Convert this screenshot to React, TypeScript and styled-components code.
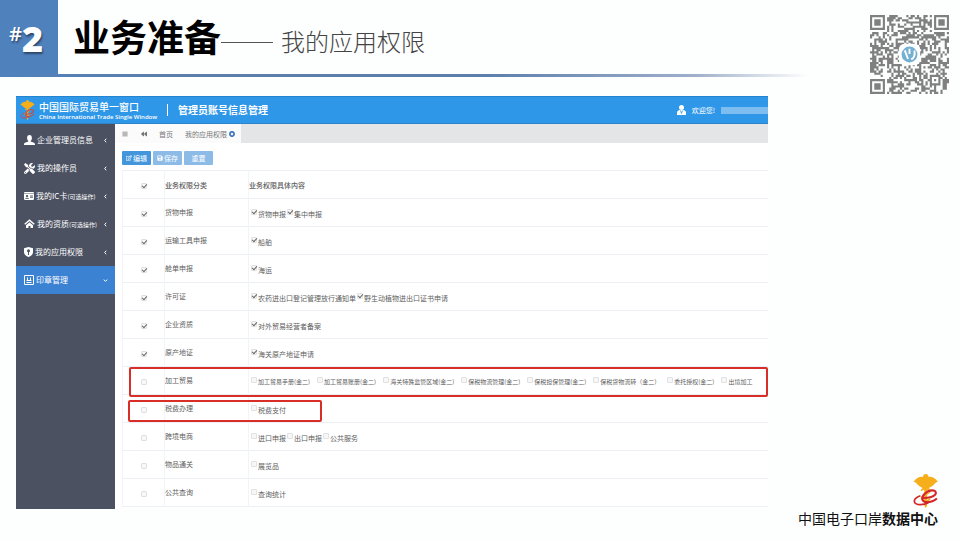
import React from "react";
import styled, { createGlobalStyle, css } from "styled-components";
import { FaTools, FaBars, FaBackward, FaRegEdit, FaSave, FaTimesCircle, FaIdCard } from "react-icons/fa";

const GlobalStyle = createGlobalStyle`
  * { box-sizing: border-box; }
  body { margin: 0; background: #fdfefe; font-family: "Noto Sans CJK SC", sans-serif; color: #555; }
  button, input { font: inherit; margin: 0; padding: 0; border: 0; }
  a { color: inherit; text-decoration: none; }
`;

const Slide = styled.div`
  display: grid;
  grid-template-columns: minmax(0, 1fr) 152px;
  min-height: 100vh;
`;

const Body = styled.main`
  display: flex;
  flex-direction: column;
`;

const TitleBar = styled.header`
  display: flex;
  flex-wrap: wrap;
`;

const Rule = styled.div`
  flex: 0 0 100%;
  height: 3px;
  background: linear-gradient(90deg, #4f81bd 0, #5b7fac 20%, #5b7fac 60%, #9fafcb 86%, #fdfefe 100%);
`;

const Badge = styled.div`
  display: flex;
  align-items: center;
  justify-content: center;
  width: 58px;
  height: 74px;
  padding: 4px 6px 0 0;
  background: #4f81bd;
  color: #fff;
  font: 800 36px/40px "Open Sans", "Noto Sans", sans-serif;
  text-shadow: 1px 2px 2px rgba(0, 0, 0, 0.45);
`;

const Hash = styled.span`
  align-self: flex-start;
  margin-top: 18px;
  font-size: 20px;
  font-weight: 600;
  line-height: 24px;
`;

const Title = styled.h1`
  margin: 0 0 0 15px;
  color: #000;
  font-size: 37px;
  font-weight: 700;
  line-height: 72px;
  white-space: nowrap;
`;

const TitleDash = styled.span`
  width: 52px;
  height: 1px;
  margin-top: 42px;
  background: #555;
`;

const Subtitle = styled.p`
  margin: 0 0 0 8px;
  color: #444;
  font-size: 24px;
  font-weight: 300;
  line-height: 82px;
  height: 74px;
  white-space: nowrap;
`;

const Side = styled.aside`
  display: flex;
  flex-direction: column;
  align-items: flex-end;
  justify-content: space-between;
  padding: 15px 11px 12px 0;
`;

const Brand = styled.footer`
  display: flex;
  flex-direction: column;
  align-items: flex-end;
  padding-right: 11px;
  color: #111;
  font-size: 14px;
  line-height: 20px;
  white-space: nowrap;
`;

const BrandMark = styled.span`
  display: flex;
`;

const App = styled.section`
  margin: 19px 40px 0 16px;
  background: #fff;
`;

const AppBar = styled.div`
  display: flex;
  align-items: center;
  height: 28px;
  padding-left: 4px;
  background: #2f97e8;
  border-top: 1px solid #2484cd;
  border-bottom: 1px solid #2d86cc;
  color: #fff;
`;

const Product = styled.div`
  display: flex;
  flex-direction: column;
  width: 128px;
  margin-left: 4px;
  padding-top: 1px;
  font-size: 10px;
  font-weight: 500;
  line-height: 12px;
  white-space: nowrap;
`;

const ProductEn = styled.span`
  font: 600 6px/8px "Open Sans", "Noto Sans", sans-serif;
`;

const AppTitle = styled.h2`
  flex: 1;
  margin: 0;
  padding-left: 10px;
  border-left: 1px solid #fff;
  font-size: 10px;
  font-weight: 700;
  line-height: 12px;
`;

const Account = styled.div`
  display: flex;
  align-items: center;
  gap: 6px;
  font-size: 7px;
`;

const Redacted = styled.span`
  width: 47px;
  height: 7px;
  background: #7dbdf0;
`;

const Columns = styled.div`
  display: grid;
  grid-template-columns: 99px minmax(0, 1fr);
`;

const Menu = styled.nav`
  padding-top: 2px;
  background: #4b5161;
`;

const MenuItem = styled.a<{ $active?: boolean }>`
  display: flex;
  align-items: center;
  gap: 2px;
  height: 28px;
  padding: 0 7px 0 8px;
  background: ${(p) => (p.$active ? "#3c82d2" : "transparent")};
  color: #fff;
  font-size: 8px;
  line-height: 12px;
  white-space: nowrap;
  > svg:last-child { margin-left: auto; }
`;

const Small = styled.small`
  font-size: 6px;
`;

const TabBar = styled.div`
  display: flex;
  align-items: stretch;
  height: 19px;
  background: #e4e5e6;
  font-size: 7px;
`;

const Tab = styled.button<{ $w: number }>`
  display: flex;
  align-items: center;
  justify-content: center;
  gap: 2px;
  width: ${(p) => p.$w}px;
  background: #fbfbfb;
  color: #777;
  white-space: nowrap;
`;

const Toolbar = styled.div`
  display: flex;
  gap: 2px;
  padding: 8px 7px 5px;
`;

const Action = styled.button<{ $muted?: boolean }>`
  display: flex;
  align-items: center;
  justify-content: center;
  gap: 1px;
  width: 29px;
  height: 14px;
  border-radius: 1px;
  background: ${(p) => (p.$muted ? "#8dbbe8" : "#4396dc")};
  color: #fff;
  font-size: 7px;
  white-space: nowrap;
`;

const Content = styled.div`
  padding-bottom: 2px;
`;

const Grid = styled.table`
  width: calc(100% - 7px);
  margin-left: 7px;
  border-collapse: collapse;
  table-layout: fixed;
  border-top: 1px solid #eceff5;
`;

const Row = styled.tr`
  position: relative;
  height: 28px;
  border-bottom: 1px solid #eceff5;
`;

const cell = css`
  padding: 0;
  text-align: left;
  font-size: 7px;
  line-height: 12px;
  border-left: 1px solid #f3f4f9;
  color: #606060;
  white-space: nowrap;
`;

const Head = styled.th`
  ${cell}
  font-weight: 500;
`;

const Cell = styled.td<{ $name?: boolean }>`
  ${cell}
  padding-bottom: ${(p) => (p.$name ? 2 : 0)}px;
`;

const TickCell = styled.td`
  ${cell}
  padding: 2px 0 0 18px;
`;

const Tick = styled.input`
  appearance: none;
  position: relative;
  flex: none;
  display: block;
  width: 6px;
  height: 6px;
  border: 1px solid #dfe1e3;
  border-radius: 1px;
  background: #f7f7f7;
  &:checked::after {
    content: "";
    position: absolute;
    left: 1px;
    top: -1px;
    width: 2px;
    height: 4px;
    border: solid #666;
    border-width: 0 1px 1px 0;
    transform: rotate(42deg);
  }
`;

const Options = styled.div<{ $dense?: boolean }>`
  display: flex;
  gap: ${(p) => (p.$dense ? 7 : 1)}px;
  padding: 2px 0 0 2px;
  font-size: ${(p) => (p.$dense ? 6 : 7)}px;
`;

const Option = styled.label`
  display: flex;
  gap: 1px;
  > input { margin-top: 1px; }
`;

const Highlight = styled.span<{ $short?: boolean }>`
  position: absolute;
  left: ${(p) => (p.$short ? 5 : 6)}px;
  top: ${(p) => (p.$short ? 5 : 0)}px;
  width: ${(p) => (p.$short ? "194px" : "calc(100% - 6px)")};
  height: ${(p) => (p.$short ? 22 : 30)}px;
  border: 2px solid #d92d27;
  border-radius: 2px;
  pointer-events: none;
`;

function Emblem({ size, base = "#d3272b" }: { size: number; base?: string }) {
  return (
    <svg width={size * 0.75} height={size} viewBox="0 0 24 32" aria-hidden="true">
      <g fill="#f6ae1b">
        <circle cx="12" cy="2.500" r="2.500" />
        <path d="M12 4c3.500-2.500 8-1.500 11.500 3.500-1.200 0-2 .3-2.500 1.200-.8.200-1.300.8-1.500 1.800-1 0-1.700.5-2 1.500-1.200 0-1.800.5-2.500 1.500h-6c-.7-1-1.300-1.500-2.500-1.500-.3-1-1-1.500-2-1.500-.2-1-.7-1.600-1.500-1.800C2.500 7.800 1.700 7.500.500 7.500 4 2.500 8.500 1.500 12 4z" />
        <path d="M10.500 12h3l-.3 18L12 32l-1.200-2z" />
        <path d="M8 16c0-3 8-3 8 0s-8 3-8 6.500 7 3.500 8 .5" fill="none" stroke="#f6ae1b" strokeWidth="1.500" />
      </g>
      <path d="M8 22.500c6 .3 13.500-1 13.500-4.800 0-3.200-6.500-3.200-10.500.800-3.800 4-2.500 8 2 8 3.500 0 7-1.300 9.500-3.500" fill="none" stroke={base} strokeWidth="2" />
      <path d="M7 20.500C3 22 .8 24.500 1.500 26.500c1 2.800 8 3 13 .5" fill="none" stroke={base} strokeWidth="1.600" />
    </svg>
  );
}

function Qr() {
  const n = 37;
  let seed = 20177;
  const d: string[] = [];
  const ring = (x: number, y: number, cx: number, cy: number) => Math.max(Math.abs(x - cx), Math.abs(y - cy));
  for (let y = 0; y < n; y++) {
    for (let x = 0; x < n; x++) {
      seed = (seed * 1103515245 + 12345) % 2147483648;
      let on = (seed >> 16) % 100 < 52;
      for (const [cx, cy] of [[3, 3], [33, 3], [3, 33]]) {
        const r = ring(x, y, cx, cy);
        if (r <= 4) on = r !== 4 && r !== 2;
      }
      const a = ring(x, y, 30, 30);
      if (a <= 2) on = a !== 1;
      if (on) d.push(`M${x} ${y}h1v1h-1z`);
    }
  }
  return (
    <svg width="79" height="79" viewBox="0 0 37 37" role="img" aria-label="QR">
      <path d={d.join("")} fill="#808080" />
      <rect x="13.5" y="13.5" width="10" height="10" rx="2.5" fill="#fdfefe" />
      <circle cx="18.5" cy="18.5" r="3.7" fill="#74b0d2" />
      <path d="M16.300 16.600l1.500 4M18.500 15.800v2.500M20.800 16.600c.4 2-.4 3.600-1.500 4.200" stroke="#fff" strokeWidth=".9" fill="none" />
    </svg>
  );
}

const Chevron = ({ down }: { down?: boolean }) => (
  <svg width="5" height="5" viewBox="0 0 5 5" fill="none" stroke="#fff" aria-hidden="true">
    <path d={down ? "M.7 1.7l1.8 1.5 1.8-1.5" : "M3.2.7L1.7 2.5l1.5 1.8"} />
  </svg>
);

const PersonIcon = () => (
  <svg width="11" height="10" viewBox="0 0 11 10" fill="#fff" aria-hidden="true">
    <ellipse cx="5.500" cy="3" rx="2.400" ry="3" />
    <path d="M4.300 5h2.400v1.600L10 7.800c.7.300 1 .9 1 2.200H0c0-1.300.3-1.900 1-2.200l3.300-1.200z" />
  </svg>
);

const HomeIcon = () => (
  <svg width="11" height="10" viewBox="0 0 11 10" aria-hidden="true">
    <path d="M.7 5.200l4.800-4 4.800 4" stroke="#fff" strokeWidth="1.400" fill="none" />
    <path d="M5.500 3.300L2 6.300V9h2.500V7h2v2H9V6.300z" fill="#fff" />
  </svg>
);

const ShieldIcon = () => (
  <svg width="9" height="10" viewBox="0 0 9 10" aria-hidden="true">
    <path d="M4.500 0L9 1.200V5c0 2.500-2 4.200-4.500 5C2 9.200 0 7.500 0 5V1.200z" fill="#fff" />
    <path d="M4.500 8V5" stroke="#4b5161" />
    <circle cx="4.500" cy="3.800" r="1.500" fill="#4b5161" />
  </svg>
);

const SealIcon = () => (
  <svg width="10" height="10" viewBox="0 0 10 10" fill="none" stroke="#fff" aria-hidden="true">
    <path d="M.5.5h9v9h-9zM2.500 7.500h5M3.500 2.500v3M6.500 2.500v3M2.500 5.500h5" />
  </svg>
);

const UserIcon = () => (
  <svg width="9" height="10" viewBox="0 0 9 10" aria-hidden="true">
    <circle cx="4.500" cy="2.500" r="2.500" fill="#fff" />
    <path d="M0 10V7.500C0 6 1.500 5 3 5h3c1.500 0 3 1 3 2.500V10z" fill="#fff" />
    <path d="M3.500 5.500l1 3 1-3" stroke="#2f97e8" strokeWidth=".8" fill="none" />
  </svg>
);

const menu = [
  { label: "企业管理员信息", icon: <PersonIcon /> },
  { label: "我的操作员", icon: <FaTools size={11} /> },
  { label: "我的IC卡", note: "(可选操作)", icon: <FaIdCard size={10} /> },
  { label: "我的资质", note: "(可选操作)", icon: <HomeIcon /> },
  { label: "我的应用权限", icon: <ShieldIcon /> },
  { label: "印章管理", icon: <SealIcon />, active: true },
];

type Mark = "full" | "short";
const rows: { name: string; on?: boolean; options: string[]; mark?: Mark }[] = [
  { name: "货物申报", on: true, options: ["货物申报", "集中申报"] },
  { name: "运输工具申报", on: true, options: ["船舶"] },
  { name: "舱单申报", on: true, options: ["海运"] },
  { name: "许可证", on: true, options: ["农药进出口登记管理放行通知单", "野生动植物进出口证书申请"] },
  { name: "企业资质", on: true, options: ["对外贸易经营者备案"] },
  { name: "原产地证", on: true, options: ["海关原产地证申请"] },
  {
    name: "加工贸易",
    mark: "full",
    options: ["加工贸易手册(金二)", "加工贸易账册(金二)", "海关特殊监管区域(金二)", "保税物流管理(金二)", "保税担保管理(金二)", "保税货物流转（金二）", "委托授权(金二)", "出境加工"],
  },
  { name: "税费办理", mark: "short", options: ["税费支付"] },
  { name: "跨境电商", options: ["进口申报", "出口申报", "公共服务"] },
  { name: "物品通关", options: ["展览品"] },
  { name: "公共查询", options: ["查询统计"] },
];

export default function Page() {
  return (
    <Slide>
      <GlobalStyle />
      <Body>
        <TitleBar>
          <Badge><Hash>#</Hash>2</Badge>
          <Title>业务准备</Title>
          <TitleDash />
          <Subtitle>我的应用权限</Subtitle>
          <Rule />
        </TitleBar>
        <App>
          <AppBar>
            <Emblem size={20} base="#c0504d" />
            <Product>
              中国国际贸易单一窗口
              <ProductEn>China International Trade Single Window</ProductEn>
            </Product>
            <AppTitle>管理员账号信息管理</AppTitle>
            <Account><UserIcon />欢迎您!<Redacted /></Account>
          </AppBar>
          <Columns>
            <Menu>
              {menu.map((m) => (
                <MenuItem key={m.label} href="#" $active={m.active}>
                  {m.icon}
                  <span>{m.label}{m.note && <Small>{m.note}</Small>}</span>
                  <Chevron down={m.active} />
                </MenuItem>
              ))}
            </Menu>
            <Content>
              <TabBar>
                <Tab $w={19} aria-label="菜单"><FaBars size={6} /></Tab>
                <Tab $w={19} aria-label="后退"><FaBackward size={6} /></Tab>
                <Tab $w={26}>首页</Tab>
                <Tab $w={62}>我的应用权限<FaTimesCircle size={6} color="#2b67b5" /></Tab>
              </TabBar>
              <Toolbar>
                <Action><FaRegEdit size={6} />编辑</Action>
                <Action $muted><FaSave size={6} />保存</Action>
                <Action $muted>重置</Action>
              </Toolbar>
              <Grid>
                <colgroup><col width="42" /><col width="84" /><col /></colgroup>
                <thead>
                  <Row>
                    <TickCell><Tick type="checkbox" defaultChecked aria-label="全选" /></TickCell>
                    <Head>业务权限分类</Head>
                    <Head>业务权限具体内容</Head>
                  </Row>
                </thead>
                <tbody>
                  {rows.map((r) => (
                    <Row key={r.name}>
                      <TickCell>
                        <Tick type="checkbox" defaultChecked={r.on} aria-label={r.name} />
                        {r.mark && <Highlight $short={r.mark === "short"} />}
                      </TickCell>
                      <Cell $name>{r.name}</Cell>
                      <Cell>
                        <Options $dense={r.mark === "full"}>
                          {r.options.map((o) => (
                            <Option key={o}><Tick type="checkbox" defaultChecked={r.on} />{o}</Option>
                          ))}
                        </Options>
                      </Cell>
                    </Row>
                  ))}
                </tbody>
              </Grid>
            </Content>
          </Columns>
        </App>
      </Body>
      <Side>
        <Qr />
        <Brand>
          <BrandMark><Emblem size={34} /></BrandMark>
          <span>中国电子口岸<b>数据中心</b></span>
        </Brand>
      </Side>
    </Slide>
  );
}
